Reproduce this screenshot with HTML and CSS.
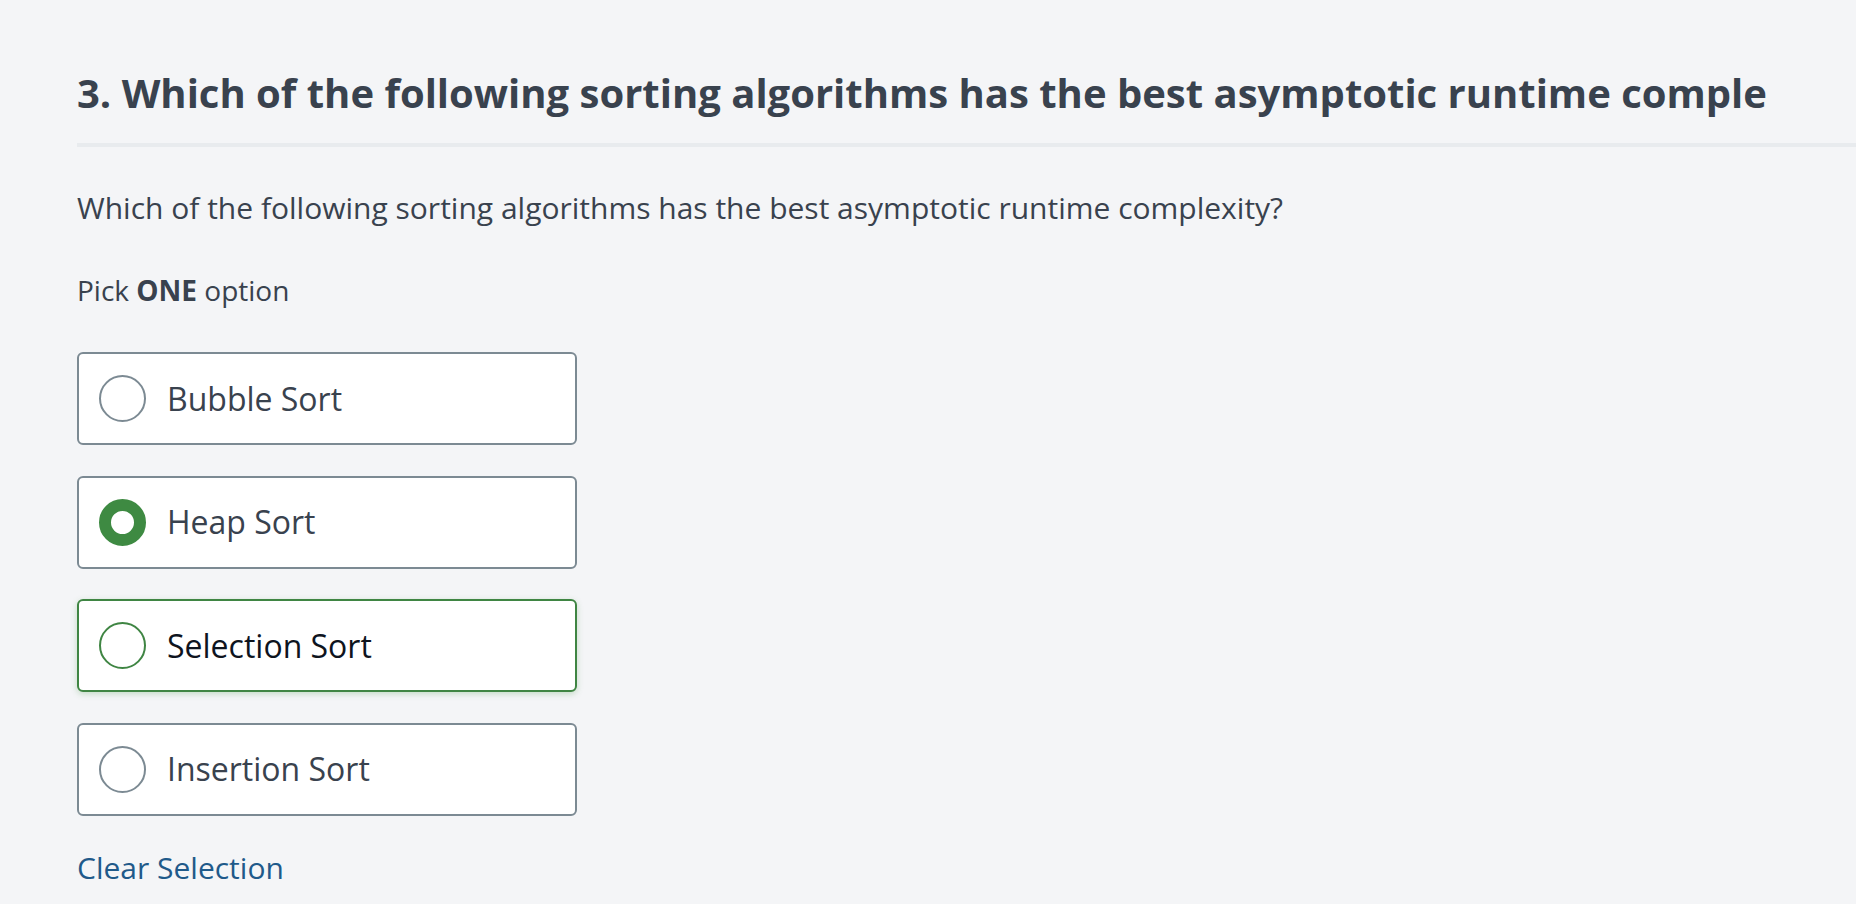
FILE: index.html
```html
<!DOCTYPE html>
<html lang="en">
<head>
<meta charset="utf-8">
<title>Question 3</title>
<link rel="stylesheet" href="styles.css">
</head>
<body>
<div class="page">
  <header class="q-header">
    <h1 class="q-title">3. Which of the following sorting algorithms has the best asymptotic runtime comple</h1>
  </header>
  <div class="q-body">
    <p class="q-text">Which of the following sorting algorithms has the best asymptotic runtime complexity?</p>
    <p class="q-hint">Pick <strong>ONE</strong> option</p>
    <div class="options">
      <label class="option"><span class="radio"></span><span class="opt-label">Bubble Sort</span></label>
      <label class="option"><span class="radio radio-checked"></span><span class="opt-label">Heap Sort</span></label>
      <label class="option option-hover"><span class="radio radio-hover"></span><span class="opt-label">Selection Sort</span></label>
      <label class="option"><span class="radio"></span><span class="opt-label">Insertion Sort</span></label>
    </div>
    <a class="clear-link" href="#">Clear Selection</a>
  </div>
</div>
</body>
</html>
```

FILE: styles.css
```css
html, body {
  margin: 0;
  padding: 0;
}
body {
  background: #f4f5f7;
  font-family: "Open Sans", "Noto Sans", sans-serif;
  color: #39424e;
  width: 1856px;
  height: 904px;
  overflow: hidden;
}
.page {
  padding-left: 77px;
}
.q-header {
  padding-top: 64px;
  padding-bottom: 21px;
  border-bottom: 4px solid #e8ebee;
}
.q-title {
  margin: 0;
  font-size: 40px;
  font-weight: 700;
  line-height: 58px;
  color: #39424e;
  white-space: nowrap;
  overflow: hidden;
}
.q-body {
  padding-top: 37px;
}
.q-text {
  margin: 0;
  font-size: 30px;
  line-height: 48px;
}
.q-hint {
  margin: 36px 0 0;
  font-size: 28px;
  line-height: 44px;
}
.q-hint strong {
  font-weight: 700;
}
.options {
  margin-top: 40px;
  display: flex;
  flex-direction: column;
  gap: 30.5px;
}
.option {
  box-sizing: border-box;
  width: 500px;
  height: 93px;
  background: #fff;
  border: 2px solid #7c8a93;
  border-radius: 6px;
  display: flex;
  align-items: center;
  padding-left: 20px;
  gap: 21px;
}
.option-hover {
  border-color: #3f8543;
  box-shadow: 0 2px 6px rgba(70, 150, 70, 0.28);
}
.radio {
  box-sizing: border-box;
  width: 47px;
  height: 47px;
  border-radius: 50%;
  border: 2px solid #7c8a93;
  background: #fff;
  flex: none;
}
.radio-checked {
  border: 12px solid #3e8a42;
}
.radio-hover {
  border-color: #3f8543;
}
.opt-label {
  font-size: 32px;
  line-height: 46px;
  color: #39424e;
}
.option-hover .opt-label {
  color: #0e141e;
}
.clear-link {
  display: inline-block;
  margin-top: 30px;
  font-size: 30px;
  line-height: 44px;
  color: #1f5a8a;
  text-decoration: none;
}
```
